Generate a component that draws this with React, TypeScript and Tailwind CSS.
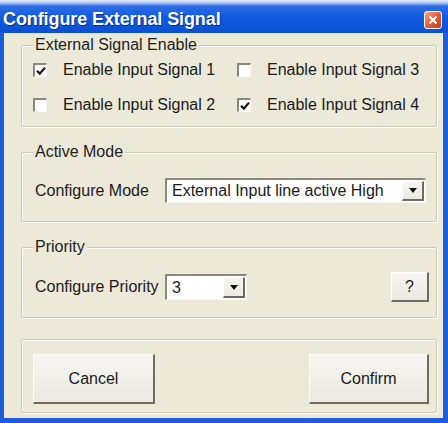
import React from "react";

const raised =
  "border-t border-l border-b-2 border-r-2 border-t-white border-l-white border-b-[#6d6b62] border-r-[#6d6b62] bg-[linear-gradient(to_bottom,#f7f6f1,#ebe9e0)]";

const sunken =
  "border border-t-2 border-l-2 border-t-[#8a887d] border-l-[#8a887d] border-b-[#f8f8f4] border-r-[#f8f8f4] bg-white";

const CheckBox = ({ checked, label }: { checked: boolean; label: string }) => (
  <div className="flex h-[24px] items-center gap-[16px]">
    <span className={`flex h-[14px] w-[14px] items-center justify-center ${sunken}`}>
      {checked && (
        <svg width="10" height="10" viewBox="0 0 10 10">
          <path d="M1 4.8 L3.8 7.6 L9 1.6" fill="none" stroke="#111" strokeWidth="2.2" />
        </svg>
      )}
    </span>
    <span>{label}</span>
  </div>
);

const DropArrow = () => (
  <span className={`flex h-full w-[22px] items-center justify-center ${raised}`}>
    <svg width="8" height="5" viewBox="0 0 8 5">
      <path d="M0 0 H8 L4 5 Z" fill="#111" />
    </svg>
  </span>
);

const GroupBox = ({ title, className, children }: { title: string; className: string; children: React.ReactNode }) => (
  <fieldset
    className={`rounded-[2px] border border-[#cbc9b9] pl-[11px] pr-[7px] shadow-[1px_1px_0_#fbfbf8,inset_1px_1px_0_#fbfbf8] ${className}`}
  >
    <legend className="bg-[#ece9d8] px-[2px] leading-[18px] text-[#1e1e1e]">{title}</legend>
    {children}
  </fieldset>
);

export default function App() {
  return (
    <div className="flex h-[423px] w-[448px] flex-col bg-[#1f5cd8] font-['Liberation_Sans',Arial,sans-serif] text-[16px] text-[#1a1a1a]">
      <div className="flex h-[33px] shrink-0 items-center justify-between bg-[linear-gradient(to_bottom,#e4ecfa_0px,#a9c4f2_3px,#2f6de6_6px,#0e59de_18px,#0b50d2_33px)] pl-[3px] pr-[6px] pt-[6px]">
        <span className="text-[18px] font-bold tracking-[-0.1px] text-white [text-shadow:1px_1px_0_#0b2f8a]">
          Configure External Signal
        </span>
        <span className="flex h-[18px] w-[18px] items-center justify-center rounded-[3px] border border-white bg-[linear-gradient(135deg,#f3a98c,#de5a32_55%,#c43c18)]">
          <svg width="10" height="10" viewBox="0 0 10 10">
            <path d="M1.5 1.5 L8.5 8.5 M8.5 1.5 L1.5 8.5" stroke="white" strokeWidth="2" />
          </svg>
        </span>
      </div>

      <div className="mb-[5px] ml-[4px] mr-[5px] flex flex-1 flex-col bg-[#ece9d8] pl-[17px] pr-[6px] pt-[3px]">
        <GroupBox title="External Signal Enable" className="pb-[9px]">
          <div className="grid grid-cols-[204px_1fr] gap-y-[11px] pt-[4px]">
            <CheckBox checked label="Enable Input Signal 1" />
            <CheckBox checked={false} label="Enable Input Signal 3" />
            <CheckBox checked={false} label="Enable Input Signal 2" />
            <CheckBox checked label="Enable Input Signal 4" />
          </div>
        </GroupBox>

        <GroupBox title="Active Mode" className="mt-[16px] pb-[18px]">
          <div className="flex items-center pt-[17px]">
            <span className="ml-[2px] w-[130px]">Configure Mode</span>
            <div className={`flex h-[25px] w-[261px] items-center py-[1px] pr-[1px] pl-[5px] ${sunken}`}>
              <span className="flex-1">External Input line active High</span>
              <DropArrow />
            </div>
          </div>
        </GroupBox>

        <GroupBox title="Priority" className="mt-[16px] pb-[15px]">
          <div className="flex h-[46px] items-start pt-[16px]">
            <span className="ml-[2px] mt-[3px] w-[130px]">Configure Priority</span>
            <div className={`mt-[2px] flex h-[26px] w-[82px] items-center py-[1px] pr-[1px] pl-[5px] ${sunken}`}>
              <span className="flex-1">3</span>
              <DropArrow />
            </div>
            <button className={`ml-auto flex h-[30px] w-[38px] items-center justify-center ${raised}`}>?</button>
          </div>
        </GroupBox>

        <div className="mt-[21px] flex justify-between rounded-[2px] border border-[#cbc9b9] pb-[8px] pl-[11px] pr-[7px] pt-[14px] shadow-[1px_1px_0_#fbfbf8,inset_1px_1px_0_#fbfbf8]">
          <button className={`h-[50px] w-[122px] ${raised}`}>Cancel</button>
          <button className={`h-[50px] w-[120px] ${raised}`}>Confirm</button>
        </div>
      </div>
    </div>
  );
}
